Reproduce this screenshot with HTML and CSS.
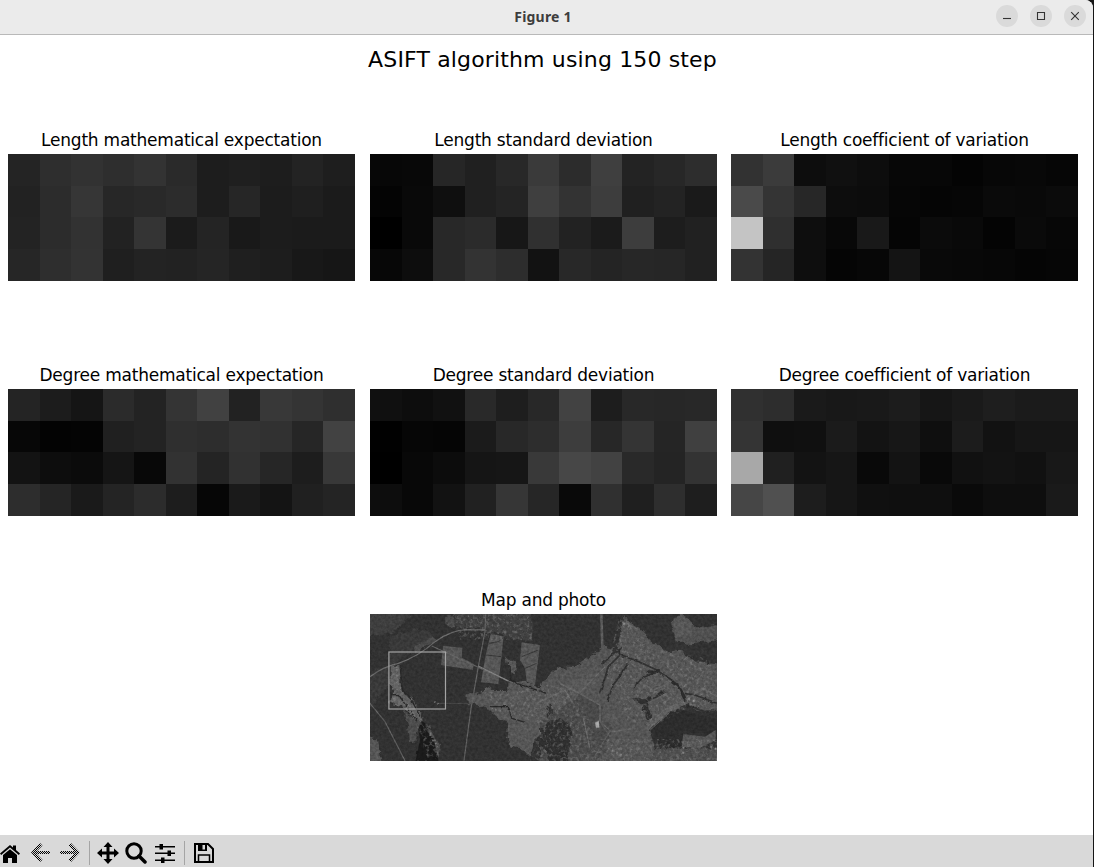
FILE: index.html
```html
<!DOCTYPE html>
<html lang="en">
<head>
<meta charset="utf-8">
<title>Figure 1</title>
<link rel="stylesheet" href="styles.css">
</head>
<body>
<div class="window">
  <header class="titlebar">
    <span class="caption">Figure 1</span>
    <div class="controls">
      <button class="ctl" aria-label="Minimize"><svg viewBox="0 0 22 22"><path d="M7 13.5h8"/></svg></button>
      <button class="ctl" aria-label="Maximize"><svg viewBox="0 0 22 22"><path d="M7.5 7.5h7v7h-7z"/></svg></button>
      <button class="ctl" aria-label="Close"><svg viewBox="0 0 22 22"><path d="M7.2 7.2l7.6 7.6M14.8 7.2l-7.6 7.6"/></svg></button>
    </div>
  </header>

  <main class="figure">
    <h1 class="suptitle">ASIFT algorithm using 150 step</h1>
    <div class="plots">
      <section class="plot"><h2>Length mathematical expectation</h2><div class="heat" data-map="lenMean"></div></section>
      <section class="plot"><h2>Length standard deviation</h2><div class="heat" data-map="lenStd"></div></section>
      <section class="plot"><h2>Length coefficient of variation</h2><div class="heat" data-map="lenVar"></div></section>
      <section class="plot"><h2>Degree mathematical expectation</h2><div class="heat" data-map="degMean"></div></section>
      <section class="plot"><h2>Degree standard deviation</h2><div class="heat" data-map="degStd"></div></section>
      <section class="plot"><h2>Degree coefficient of variation</h2><div class="heat" data-map="degVar"></div></section>
      <section class="plot photo"><h2>Map and photo</h2>
        <svg class="map" viewBox="0 0 347 147">
          <defs>
            <filter id="grain" color-interpolation-filters="sRGB" x="0" y="0" width="100%" height="100%">
              <feTurbulence type="fractalNoise" baseFrequency="0.35" numOctaves="3" seed="7"/>
              <feColorMatrix values="1.4 0 0 0 -0.2  1.4 0 0 0 -0.2  1.4 0 0 0 -0.2  0 0 0 0 1"/>
            </filter>
            <filter id="rough" color-interpolation-filters="sRGB" x="-5%" y="-5%" width="110%" height="110%">
              <feTurbulence type="fractalNoise" baseFrequency="0.14" numOctaves="3" seed="3"/>
              <feDisplacementMap in="SourceGraphic" scale="7" xChannelSelector="R" yChannelSelector="G"/>
            </filter>
            <filter id="bend" color-interpolation-filters="sRGB" x="-5%" y="-5%" width="110%" height="110%">
              <feTurbulence type="fractalNoise" baseFrequency="0.2" numOctaves="2" seed="5"/>
              <feDisplacementMap in="SourceGraphic" scale="3" xChannelSelector="R" yChannelSelector="G"/>
            </filter>
            <filter id="specks" color-interpolation-filters="sRGB" x="0" y="0" width="100%" height="100%">
              <feTurbulence type="fractalNoise" baseFrequency="0.3" numOctaves="3" seed="12"/>
              <feColorMatrix values="0 0 0 0 .5  0 0 0 0 .5  0 0 0 0 .5  4 0 0 0 -2"/>
              <feComposite in2="SourceGraphic" operator="in"/>
            </filter>
          </defs>
          <rect width="347" height="147" fill="#313131"/>
          <!-- built-up land and open ground -->
          <g filter="url(#rough)">
            <g transform="translate(-5 -29) scale(.33333)">
              <path fill="#3e3e3e" d="M5 77H150L80 145 5 155zM270 77H500V168L440 165 410 145 360 145 350 130 290 130 265 110z"/>
              <path fill="#393939" d="M75 150L180 130 210 150 90 235 70 300 5 380V270L75 240z"/>
              <path fill="#4b4b4b" d="M145 185L200 155 218 165 155 200zM243 100L262 95 272 120 260 130 245 120z"/>
              <path fill="#606060" d="M78 240L105 240 112 320 145 345 175 400 165 412 110 365 74 355 85 325 75 300z"/>
              <path fill="#4c4c4c" d="M120 380L165 410 155 465 135 475 130 430zM185 420L225 480 222 518 190 470z"/>
              <path fill="#555" d="M5 452L35 460 48 537H5z"/>
              <path fill="#565656" d="M305 325L345 325 375 308 380 318 430 318 430 290 480 285 525 310 545 310V430L510 465 490 515 470 490 440 485 425 460 430 410 400 400 365 365 305 360zM420 215L455 235 450 265 435 262z"/>
            </g>
            <g transform="translate(170 -29) scale(.33333)">
              <path fill="#545454" d="M0 300L55 245 100 250 190 185 230 205 250 95 300 130 330 165 390 205 425 190 450 225 541 240V380L470 378 440 350 325 430 345 490 330 537H0V410L50 390 30 360 0 380z"/>
              <path fill="#505050" d="M390 110L425 90 475 125 541 120V165L450 175 410 170z"/>
              <path fill="#494949" d="M120 330L180 360 215 430 180 537H0V410L60 370z"/>
              <path fill="#2e2e2e" d="M0 430L60 395 95 430 80 537H30L20 500 0 480zM273 340L330 340 370 310 375 330 320 350 340 395 320 405 310 365z"/>
              <path fill="#4c4c4c" d="M345 490L541 490V537H330z"/>
              <path fill="#333" d="M365 190L430 170 480 195 541 190V215L440 205 420 195 385 205z"/>
            </g>
          </g>
          <!-- lakes -->
          <path filter="url(#bend)" fill="#1a1a1a" d="M51 107l4 2 1.500 8 7 7 5 23H45.500l4.500-21-1.500-11z"/>
          <path filter="url(#bend)" fill="#2c2c2c" d="M295 97L316 97 350 106V126L333 119 313 119 312 136 287 129 280 116 293 106z"/>
          <!-- cultivated fields -->
          <g transform="translate(-5 -29) scale(.33333)" fill="#565656">
            <path d="M235 183L292 188 290 218 327 237 323 255 228 240zM377 147L416 154 410 210 400 297 348 292 362 210zM470 172L525 180 510 300 485 290 480 250 465 225z"/>
            <path fill="none" stroke="#373737" stroke-width="3" d="M373 175L400 170 414 160M364 210L408 215M470 215L520 195M480 250L515 235"/>
          </g>
          <g transform="translate(170 -29) scale(.33333)">
            <path fill="#5c5c5c" d="M185 382L230 395 230 410 185 412zM400 100L425 92 455 115 455 150 405 160zM120 325L180 285 160 265 60 300 110 322z" opacity=".6"/>
            <path fill="#606060" d="M315 430L375 370 440 345 438 358 385 382 325 435z"/>
            <path fill="#565656" d="M430 447L495 455 527 435 527 465 480 490 425 485z"/>
          </g>
          <!-- urban blocks -->
          <path filter="url(#specks)" opacity=".45" d="M82 0H162V26H90zM22 52L34 80 56 102 70 145H58L42 105 22 88zM105 78L145 78 170 70 205 75 225 120 200 147H160L170 110 140 100zM250 0L285 35 340 45 345 95 318 94 280 114 255 105 235 60zM198 125H347V147H190z"/>
          <!-- roads and ravines -->
          <g transform="translate(-5 -29) scale(.33333)" fill="none">
            <path stroke="#6a6a6a" stroke-width="3.500" d="M15 275Q55 245 100 235Q160 215 210 170Q260 135 305 134L360 135"/>
            <path stroke="#606060" stroke-width="3.500" d="M362 87L360 140 340 245 318 370 297 527M200 183L435 290 530 318M15 355L60 410 120 527"/>
            <path stroke="#4a4a4a" stroke-width="3" d="M215 355H310"/>
            <path stroke="#808080" stroke-width="4" d="M340 243L430 288"/>
          </g>
          <g filter="url(#bend)">
            <g transform="translate(-5 -29) scale(.33333)" fill="none">
              <path stroke="#282828" stroke-width="4" d="M105 240L112 315 140 345 165 395M75 330L100 328 125 365 155 405M435 240L437 285 455 295 545 325M375 365L430 365 440 400 480 412"/>
              <path stroke="#757575" stroke-width="5" stroke-dasharray="4 7" d="M95 245L98 315M110 350L150 395M195 445L218 485M355 135L366 135M208 350L225 360M380 370L410 380"/>
            </g>
            <g transform="translate(170 -29) scale(.33333)" fill="none">
              <path stroke="#303030" stroke-width="5" d="M235 195L240 210 205 245 190 295 178 325M240 210L300 232 350 255 395 285 420 310 435 350M265 235L245 265 220 300 202 348M350 260L305 280 280 310M245 190L220 205 185 240M440 360L490 378 530 393M435 325L465 330 531 355"/>
              <path stroke="#2b2b2b" stroke-width="9" d="M395 290L415 303 435 340M320 260L355 262"/>
            </g>
          </g>
          <g transform="translate(170 -29) scale(.33333)" fill="none">
            <path stroke="#595959" stroke-width="8" d="M184 87L187 187"/>
            <path stroke="#6e6e6e" stroke-width="3" d="M60 295L110 320 180 360 180 410 215 440 280 430M120 322L195 245M300 290L340 315 385 295M330 435L390 380M445 340L490 310 531 335M0 350L75 315 100 355M130 400L150 490M290 130L245 110"/>
            <path stroke="#646464" stroke-width="2.500" d="M350 325L390 370M365 315L415 365M380 305L430 350M330 350L400 315M0 370L80 330M20 310L60 370M0 340L35 405M180 410L240 500M215 430L160 520"/>
            <path stroke="#888" stroke-width="6" stroke-dasharray="6 9" d="M170 415L177 425M250 115L268 125M445 340L465 350M215 495L245 510M430 485V515M510 485L530 492"/>
            <path fill="#aaa" d="M165 412L177 408 178 427 168 429z"/>
          </g>
          <rect class="grain" width="347" height="147" filter="url(#grain)"/>
          <rect x="18.9" y="38" width="56.6" height="57" fill="none" stroke="#a4a4a4" stroke-width="1.2"/>
        </svg>
      </section>
    </div>
  </main>

  <footer class="toolbar">
    <svg class="home" width="20" height="22" viewBox="0 0 20 22"><path d="M0 11.5L10 3l3 2.6V3.5h3V8l4 3.5-1.2 1.4L10 5.6 1.2 12.900z"/><path d="M3 13l7-5.800L17 13v8h-5v-5H8v5H3z"/></svg>
    <svg class="back" width="20" height="22" viewBox="0 0 20 22">
      <defs><pattern id="dither" width="2" height="2" patternUnits="userSpaceOnUse"><path d="M0 0h1v1H0zM1 1h1v1H1z" shape-rendering="crispEdges"/></pattern></defs>
      <path fill="url(#dither)" d="M9 1l2.500 2.500L6 9h13v3H6l5.500 5.800L9 20 0 10.500z"/></svg>
    <svg class="forward" width="20" height="22" viewBox="0 0 20 22"><path fill="url(#dither)" d="M11 1L8.500 3.500 14 9H0v3h14l-5.500 5.800L11 20l9-9.500z"/></svg>
    <i class="sep"></i>
    <svg class="pan" width="22" height="22" viewBox="0 0 22 22"><path d="M11 0l4.500 5h-3v4.500H17v-3l5 4.500-5 4.500v-3h-4.500V17h3L11 22l-4.500-5h3v-4.500H5v3L0 11l5-4.500v3h4.500V5h-3z"/></svg>
    <svg class="lens" width="22" height="22" viewBox="0 0 22 22"><circle cx="9" cy="9" r="7.200" fill="none" stroke="#000" stroke-width="3"/><path d="M14 14l6 6" stroke="#000" stroke-width="3.500" stroke-linecap="round"/></svg>
    <svg class="sliders" width="20" height="22" viewBox="0 0 20 22"><path d="M0 4h20v1.500H0zM0 10.500h20V12H0zM0 17.500h20V19H0zM4.500 2H8v5.500H4.500zM12.500 8.500H16V14h-3.500zM6 15.500h3.500V21H6z"/></svg>
    <i class="sep"></i>
    <svg class="save" width="20" height="22" viewBox="0 0 20 22"><path d="M1 2h13l5 5v13H1z" fill="none" stroke="#000" stroke-width="2"/><path d="M4 2h9v7H4z"/><path d="M8.500 3H11v4.500H8.500z" fill="#d9d9d9"/><path d="M4.500 20v-7h11v7" fill="none" stroke="#000" stroke-width="1.500"/></svg>
  </footer>
</div>
<script src="heatmaps.js"></script>
</body>
</html>
```
FILE: styles.css
```css
* { box-sizing: border-box; }

body {
  margin: 0;
  background: #151515;
  overflow: hidden;
}

.window {
  display: flex;
  flex-direction: column;
  width: 1093px;
  height: 867px;
  background: #fff;
  border-top-right-radius: 8px;
  overflow: hidden;
}

.titlebar {
  display: grid;
  grid-template-columns: 1fr auto 1fr;
  align-items: center;
  height: 35px;
  padding: 0 7px 3px 0;
  background: #ebebeb;
  border-bottom: 1px solid #b9b9b9;
}

.caption {
  grid-column: 2;
  padding-top: 2px;
  font: bold 14px/20px "Noto Sans", "Open Sans", sans-serif;
  letter-spacing: .2px;
  color: #3d3d3d;
}

.controls {
  display: flex;
  justify-content: flex-end;
  gap: 12px;
}

.ctl {
  width: 22px;
  height: 22px;
  padding: 0;
  border: 0;
  border-radius: 50%;
  background: #dadada;
}

.ctl svg {
  display: block;
  fill: none;
  stroke: #333;
  stroke-width: 1.1;
}

.figure {
  flex: 1;
  color: #000;
  font-family: "DejaVu Sans", sans-serif;
}

.suptitle {
  width: 1085px;
  height: 40px;
  margin: 0;
  padding-top: 10px;
  font-size: 22px;
  font-weight: 400;
  line-height: 30px;
  letter-spacing: .15px;
  text-align: center;
}

.plots {
  display: grid;
  grid-template-columns: 362px 361px 347px;
  grid-template-rows: 235px 225px 180px;
  padding: 54px 0 0 8px;
}

.plot { width: 347px; }

.photo { grid-column: 2; }

.plot h2 {
  margin: 0;
  font-size: 17px;
  font-weight: 400;
  line-height: 23px;
  height: 25px;
  letter-spacing: -.22px;
  text-align: center;
  white-space: nowrap;
}

.heat {
  display: grid;
  grid-template-columns: 32px 31px 32px 31px 32px 31px 32px 31px 32px 31px 32px;
  grid-template-rows: 32px 31px 32px 32px;
}

.map {
  display: block;
  width: 347px;
  height: 147px;
}

.grain {
  opacity: .18;
  mix-blend-mode: overlay;
}

.toolbar {
  display: flex;
  align-items: center;
  height: 32px;
  padding-top: 3px;
  background: #d9d9d9;
}

.toolbar svg { flex: none; }
.back { margin-left: 11px; }
.forward { margin-left: 9px; }
.pan { margin-left: 7px; }
.lens { margin-left: 6px; }
.sliders { margin-left: 8px; }
.save { margin-left: 9px; }

.sep {
  width: 1px;
  height: 24px;
  margin-left: 9px;
  background: #a5a5a5;
}
```
FILE: heatmaps.js
```js
// Grey level of each cell, two hex digits, row by row.
const maps = {
  lenMean: [
    "24 2e 32 2e 33 2a 1d 1f 1d 23 1e",
    "22 2c 36 27 29 2c 1d 26 1c 1f 1b",
    "23 2c 32 22 34 1b 24 19 1c 1b 1b",
    "26 2e 33 1f 23 22 25 1f 1d 18 16"],
  lenStd: [
    "07 08 26 20 28 3a 2c 3f 23 27 2d",
    "04 09 0f 20 24 3f 33 3d 20 23 1a",
    "00 09 28 2b 17 30 22 1b 3d 1d 21",
    "07 0d 28 33 2d 12 28 24 27 26 21"],
  lenVar: [
    "32 3b 0d 10 0d 07 07 04 07 08 06",
    "4a 34 27 0d 0c 06 05 06 0a 09 0b",
    "c4 2f 0e 08 19 05 0b 09 04 0a 07",
    "33 25 0e 05 07 14 09 08 07 05 06"],
  degMean: [
    "24 1c 15 2b 23 34 41 22 38 34 2f",
    "07 03 04 20 23 2f 2d 33 31 26 42",
    "13 0d 0b 15 08 32 24 31 26 1d 38",
    "2d 25 1a 24 2c 1d 06 1a 14 20 24"],
  degStd: [
    "10 0d 11 29 1e 28 42 1d 28 27 28",
    "01 06 05 1b 28 2d 3d 27 34 25 40",
    "00 08 0c 15 16 39 47 42 29 24 33",
    "0d 08 12 21 36 26 09 30 1f 2e 1e"],
  degVar: [
    "30 2d 1a 18 19 1c 16 1a 1e 1b 1b",
    "34 0f 10 1b 13 17 0f 1c 12 16 16",
    "a8 20 13 16 09 13 09 11 13 11 18",
    "46 50 1d 16 10 0f 0f 0a 0e 0e 1a"]
};

for (const heat of document.querySelectorAll(".heat")) {
  for (const level of maps[heat.dataset.map].join(" ").split(" ")) {
    const cell = document.createElement("div");
    cell.style.backgroundColor = "#" + level.repeat(3);
    heat.append(cell);
  }
}
```
